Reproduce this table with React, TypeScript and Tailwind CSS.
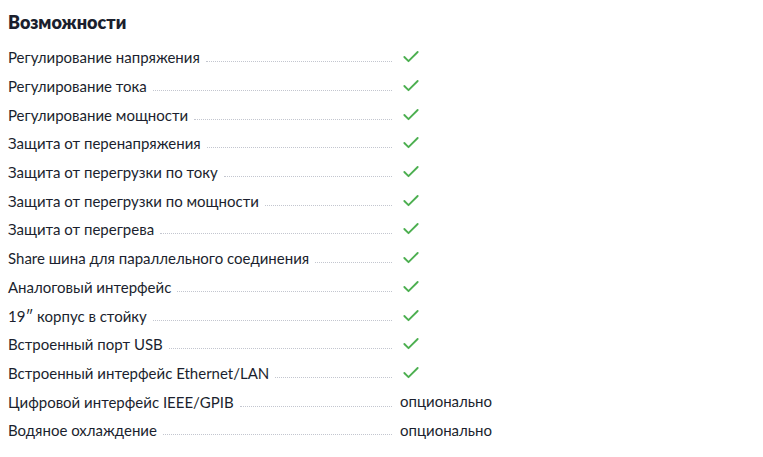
import { Check } from 'lucide-react'

interface Feature {
  label: string
  value?: string
}

const features: Feature[] = [
  { label: 'Регулирование напряжения' },
  { label: 'Регулирование тока' },
  { label: 'Регулирование мощности' },
  { label: 'Защита от перенапряжения' },
  { label: 'Защита от перегрузки по току' },
  { label: 'Защита от перегрузки по мощности' },
  { label: 'Защита от перегрева' },
  { label: 'Share шина для параллельного соединения' },
  { label: 'Аналоговый интерфейс' },
  { label: '19″ корпус в стойку' },
  { label: 'Встроенный порт USB' },
  { label: 'Встроенный интерфейс Ethernet/LAN' },
  { label: 'Цифровой интерфейс IEEE/GPIB', value: 'опционально' },
  { label: 'Водяное охлаждение', value: 'опционально' },
]

export default function App() {
  return (
    <div
      className="min-h-screen bg-white pl-2 pt-[11px] text-[#1b1f2e]"
      style={{ fontFamily: 'Lato, "Noto Sans", sans-serif' }}
    >
      <h2 className="text-[18px] font-extrabold leading-[22px] mb-[10px]">Возможности</h2>
      <div className="flex flex-col">
        {features.map(f => (
          <div key={f.label} className="flex items-center h-[28.7px]">
            <div className="w-[384px] flex items-end">
              <span className="text-[15px] leading-[18px] whitespace-nowrap">{f.label}</span>
              <span className="flex-1 ml-[6px] mb-[4px] border-b border-dotted border-[#c3c6cf]" />
            </div>
            <div className="ml-[8px] text-[15px]">
              {f.value ? (
                <span>{f.value}</span>
              ) : (
                <Check className="w-[20px] h-[20px] text-[#4caf50] ml-[1px]" strokeWidth={2.25} />
              )}
            </div>
          </div>
        ))}
      </div>
    </div>
  )
}
